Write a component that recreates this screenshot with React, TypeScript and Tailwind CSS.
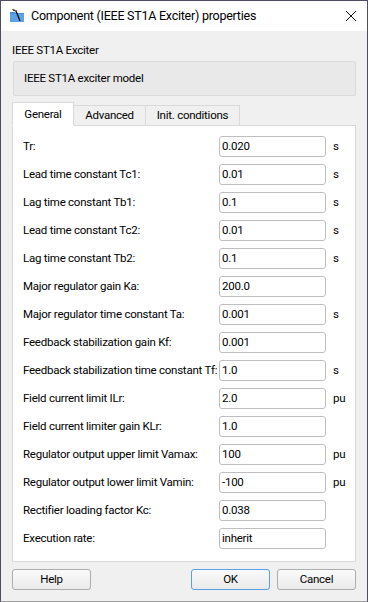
import React from 'react';

type Row = { label: string; value: string; unit?: string };

const rows: Row[] = [
  { label: 'Tr:', value: '0.020', unit: 's' },
  { label: 'Lead time constant Tc1:', value: '0.01', unit: 's' },
  { label: 'Lag time constant Tb1:', value: '0.1', unit: 's' },
  { label: 'Lead time constant Tc2:', value: '0.01', unit: 's' },
  { label: 'Lag time constant Tb2:', value: '0.1', unit: 's' },
  { label: 'Major regulator gain Ka:', value: '200.0' },
  { label: 'Major regulator time constant Ta:', value: '0.001', unit: 's' },
  { label: 'Feedback stabilization gain Kf:', value: '0.001' },
  { label: 'Feedback stabilization time constant Tf:', value: '1.0', unit: 's' },
  { label: 'Field current limit ILr:', value: '2.0', unit: 'pu' },
  { label: 'Field current limiter gain KLr:', value: '1.0' },
  { label: 'Regulator output upper limit Vamax:', value: '100', unit: 'pu' },
  { label: 'Regulator output lower limit Vamin:', value: '-100', unit: 'pu' },
  { label: 'Rectifier loading factor Kc:', value: '0.038' },
  { label: 'Execution rate:', value: 'inherit' },
];

const AppIcon = () => (
  <svg width="14" height="14" viewBox="0 0 14 14">
    <path d="M0 3 L5 3 L6 4 L14 4 L14 13 L0 13 Z" fill="#4a90d9" />
    <path d="M0 5 L14 5 L14 13 L0 13 Z" fill="#5ea2e6" />
    <path d="M3 1 L6 2 L10 12" stroke="#111" strokeWidth="1.3" fill="none" />
    <path d="M2 0 L7 2" stroke="#666" strokeWidth="1" />
  </svg>
);

const App: React.FC = () => {
  return (
    <div
      className="w-[368px] h-[602px] bg-[#f0f0f0] border border-[#4a4d63] border-b-[#a0a0a0] flex flex-col text-[11.5px] tracking-[-0.25px] text-black"
      style={{ fontFamily: 'Roboto, "Liberation Sans", sans-serif' }}
    >
      {/* Title bar */}
      <div className="h-[30px] bg-white flex items-center shrink-0">
        <div className="ml-[9px] w-[14px] flex items-center">
          <AppIcon />
        </div>
        <span className="ml-[7px] text-[12.5px]">Component (IEEE ST1A Exciter) properties</span>
        <div className="ml-auto mr-[10px] w-[12px] h-[12px]">
          <svg width="12" height="12" viewBox="0 0 12 12">
            <path d="M1 1 L11 11 M11 1 L1 11" stroke="#111" strokeWidth="1" />
          </svg>
        </div>
      </div>

      <div className="flex flex-col px-[11px] pt-[11px]">
        <div className="h-[16px] leading-[16px]">IEEE ST1A Exciter</div>
        <div className="mt-[3px] ml-[1px] h-[35px] bg-[#e9e9e9] border border-[#dadada] rounded-[2px] flex items-center pl-[10px]">
          IEEE ST1A exciter model
        </div>

        {/* Tabs */}
        <div className="mt-[6px] flex items-end h-[24px] relative z-10">
          <div className="w-[62px] h-[24px] bg-white border border-[#d9d9d9] border-b-white flex items-center justify-center pt-[1px]">
            General
          </div>
          <div className="w-[72px] h-[21px] bg-[#f0f0f0] border border-[#d9d9d9] border-l-0 flex items-center justify-center">
            Advanced
          </div>
          <div className="w-[94px] h-[21px] bg-[#f0f0f0] border border-[#d9d9d9] border-l-0 flex items-center justify-center">
            Init. conditions
          </div>
        </div>

        {/* Panel */}
        <div className="-mt-[1px] h-[437px] bg-white border border-[#d9d9d9] flex flex-col pt-[10px] pl-[10px] gap-[7px]">
          {rows.map((r) => (
            <div key={r.label} className="flex items-center h-[21px]">
              <div className="w-[196px] shrink-0 whitespace-nowrap">{r.label}</div>
              <div className="w-[107px] shrink-0 h-[21px] border border-[#bfbfbf] rounded-[3px] flex items-center pl-[2px]">
                {r.value}
              </div>
              <div className="ml-[7px]">{r.unit ?? ''}</div>
            </div>
          ))}
        </div>

        {/* Buttons */}
        <div className="mt-[7px] flex items-center h-[21px]">
          <button className="w-[79px] h-[21px] border border-[#adadad] rounded-[3px] bg-gradient-to-b from-[#fafafa] to-[#eaeaea]">
            Help
          </button>
          <button className="ml-auto w-[79px] h-[21px] border border-[#5aa0e6] rounded-[3px] bg-gradient-to-b from-[#fafafa] to-[#eaeaea]">
            OK
          </button>
          <button className="ml-[7px] w-[79px] h-[21px] border border-[#adadad] rounded-[3px] bg-gradient-to-b from-[#fafafa] to-[#eaeaea]">
            Cancel
          </button>
        </div>
      </div>
    </div>
  );
};

export default App;
